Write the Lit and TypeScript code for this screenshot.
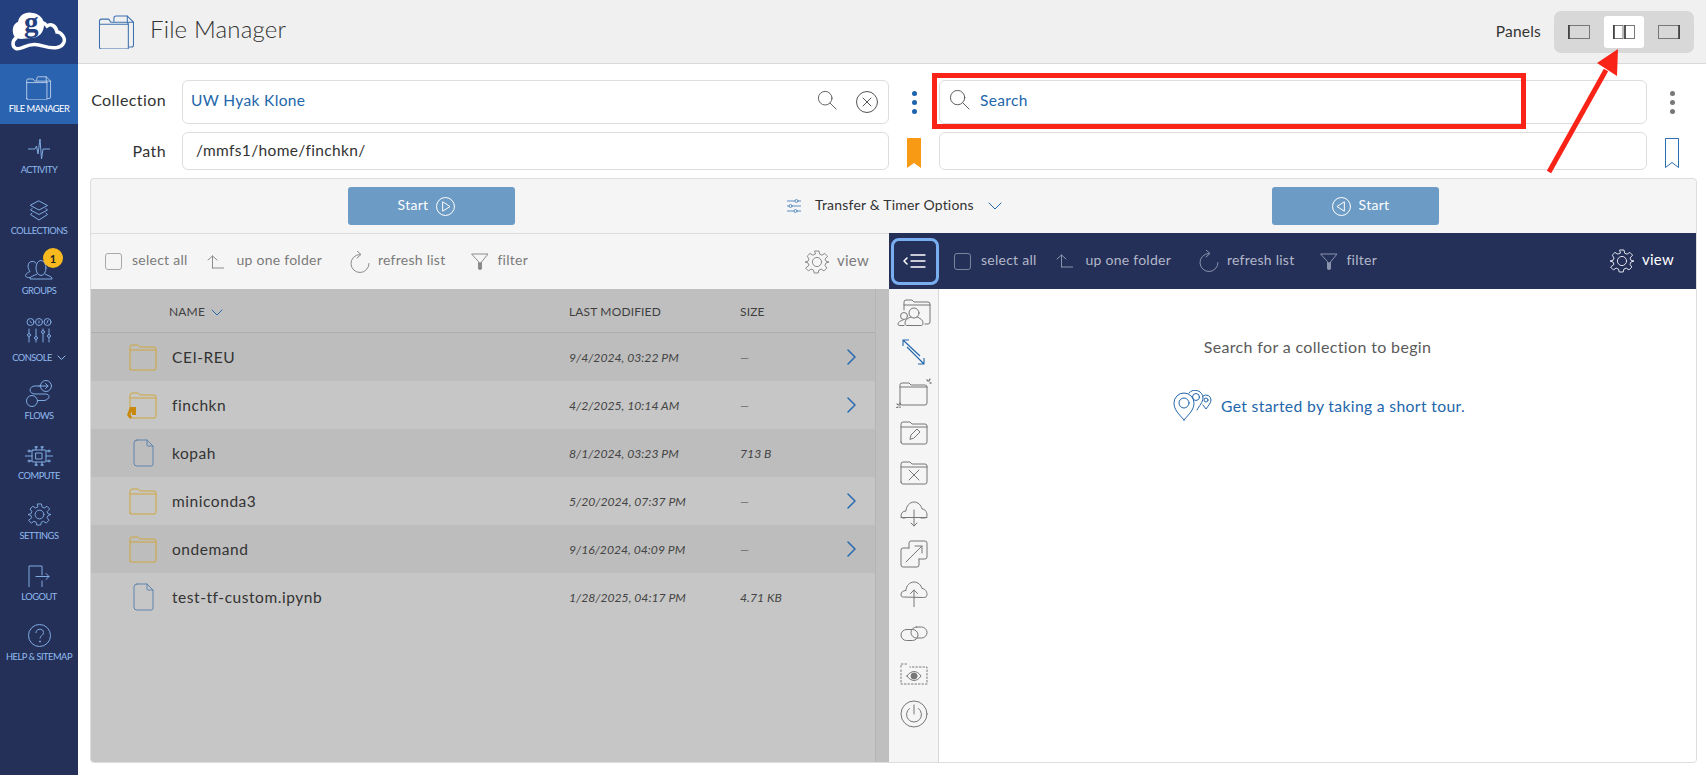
import { LitElement, html, css, svg } from "lit";
import { customElement } from "lit/decorators.js";

const icon = (w: number, h: number, vb: string, body: unknown, cls = "") => html`<svg class="ic ${cls}" width=${w} height=${h} viewBox=${vb} fill="none" stroke="currentColor" stroke-width="1" stroke-linecap="round" stroke-linejoin="round">${body}</svg>`;

const fileFolder = svg`<path d="M15 6V3a2 2 0 0 1 2-2h11l6 6v22a2 2 0 0 1-2 2h-2"/><path d="M28 1v6h6"/><path d="M1 31V6a2 2 0 0 1 2-2h7l2 3h15a2 2 0 0 1 2 2v23a1 1 0 0 1-1 1H3a2 2 0 0 1-2-2z"/><path d="M1 9h28"/>`;
const search = (s = 22) => icon(s, s, "0 0 22 22", svg`<circle cx="9" cy="9" r="7.5"/><path d="M14.5 14.5 21 21"/>`);
const gear = (s = 24) => icon(s, s, "0 0 24 24", svg`<circle cx="12" cy="12" r="4.6"/><path d="M10 1h4l.7 3.2 2.3 1 2.8-1.8 2.8 2.8L20 9l1 2.3 3 .7v0l-3 1-1 2.3 1.8 2.8-2.8 2.8-2.8-1.8-2.3 1-.7 2.9h-4l-.7-2.9-2.3-1-2.8 1.8-2.8-2.8L4 15.3 3 13l-3-1 3-.7L4 9 2.2 6.2 5 3.4l2.8 1.8 2.3-1z"/>`);
const folderRow = svg`<path d="M1 25V3a2 2 0 0 1 2-2h6l2 2h14a2 2 0 0 1 2 2v19a2 2 0 0 1-2 2H2a1 1 0 0 1-1-1z"/><path d="M1 6h26"/>`;
const fileRow = svg`<path d="M4 1h10l6 6v18a2 2 0 0 1-2 2H4a3 3 0 0 1-3-3V4a3 3 0 0 1 3-3z"/><path d="M14 1v5a1 1 0 0 0 1 1h5" stroke-width="1"/>`;

const navItems: { label: string; cls?: string; badge?: string; chev?: boolean; icon: unknown }[] = [
  { label: "File Manager", cls: "on", icon: icon(26, 24, "0 0 36 33", fileFolder) },
  { label: "Activity", icon: icon(22, 22, "0 0 22 22", svg`<path d="M0 11h7l1.5-3 1.5 8 2-15 1.5 20 1.5-10h7"/>`) },
  { label: "Collections", icon: icon(20, 21, "0 0 20 21", svg`<path d="M10 1l8.5 4.5L10 10 1.5 5.500z"/><path d="M3 8.500 1.500 10 10 14.500 18.500 10 17 8.500"/><path d="M3 13 1.500 14.500 10 20l8.500-5.500L17 13"/>`) },
  { label: "Groups", cls: "grp", badge: "1", icon: icon(28, 20, "0 0 28 20", svg`<ellipse cx="16" cy="8" rx="5" ry="7.500"/><path d="M12 14c-3 2-6 2-7 4v1h22v-1c-1-2-4-2-7-4"/><path d="M11 3a4.500 4.500 0 0 0-8 3c0 2 1 4 2 5.500-2 1-4 2-4.500 4 0 1 1 2 3 2h1"/>`) },
  { label: "Console", cls: "con", chev: true, icon: icon(26, 26, "0 0 26 26", svg`<circle cx="4.500" cy="4" r="3.500"/><circle cx="13" cy="4" r="3.500"/><circle cx="21.500" cy="4" r="3.500"/><path d="M4 3l1.500 2M13 3v2M22 2.500 21 5"/><path d="M3 11v13M10 11v13M17 11v13M23 11v13"/><circle cx="3" cy="17" r="1.500" fill="#253059"/><circle cx="10" cy="20" r="1.500" fill="#253059"/><circle cx="17" cy="14" r="1.500" fill="#253059"/><circle cx="23" cy="18" r="1.500" fill="#253059"/>`) },
  { label: "Flows", cls: "flo", icon: icon(27, 27, "0 0 27 27", svg`<circle cx="6" cy="21" r="5.500"/><circle cx="20" cy="6" r="5.500"/><path d="M13 6h9M19.500 3.500 22 6l-2.500 2.500"/><path d="M14 6H9c-3 0-5 2-5 4s2 4 5 4h10c3 0 4 1 4 2.500s-2 4-5 4h-6"/>`) },
  { label: "Compute", icon: icon(28, 20, "0 0 28 20", svg`<rect x="7" y="4" width="14" height="12" rx="1"/><rect x="11" y="7" width="6" height="6"/><path d="M0 10h7M21 10h7M5 5h2M5 15h2M21 5h2M21 15h2M11 1v3M17 1v3M11 16v3M17 16v3"/><circle cx="4" cy="5" r="1"/><circle cx="4" cy="15" r="1"/><circle cx="24" cy="5" r="1"/><circle cx="24" cy="15" r="1"/><circle cx="11" cy="1" r="1"/><circle cx="17" cy="1" r="1"/><circle cx="11" cy="19" r="1"/><circle cx="17" cy="19" r="1"/>`) },
  { label: "Settings", icon: gear(23) },
  { label: "Logout", icon: icon(22, 22, "0 0 22 22", svg`<path d="M1 22V1h13v9M14 16v6"/><path d="M8 11.500h13M18 8.500l3 3-3 3"/>`) },
  { label: "Help & Sitemap", icon: html`<svg class="ic" width="23" height="23" viewBox="0 0 23 23" fill="none" stroke="currentColor"><circle cx="11.500" cy="11.500" r="11"/><path d="M8 9c0-5 7.500-5 7.500-.5 0 3-3.500 3-3.500 6"/><circle cx="12" cy="17.500" r=".6" fill="currentColor"/></svg>` },
];

const rows = [
  { name: "CEI-REU", date: "9/4/2024, 03:22 PM", size: "—", kind: "folder" },
  { name: "finchkn", date: "4/2/2025, 10:14 AM", size: "—", kind: "link" },
  { name: "kopah", date: "8/1/2024, 03:23 PM", size: "713 B", kind: "file" },
  { name: "miniconda3", date: "5/20/2024, 07:37 PM", size: "—", kind: "folder" },
  { name: "ondemand", date: "9/16/2024, 04:09 PM", size: "—", kind: "folder" },
  { name: "test-tf-custom.ipynb", date: "1/28/2025, 04:17 PM", size: "4.71 KB", kind: "file" },
];

const stripIcons = [
  icon(34, 28, "0 0 34 28", svg`<path d="M7 11V3a2 2 0 0 1 2-2h6l2 2h14a2 2 0 0 1 2 2v18a2 2 0 0 1-2 2h-3"/><path d="M7 6h26"/><circle cx="17" cy="14" r="5"/><path d="M14 18c-3 1-6 3-6 6 0 2 1 2.500 2 2.500h14c1 0 2-.5 2-2.500 0-3-3-5-6-6"/><circle cx="7" cy="17" r="3.500"/><path d="M6 21c-2 .5-5 2-5 4 0 1 .5 1.500 2 1.500h4"/>`),
  html`<svg class="ic" width="24" height="28" viewBox="0 0 24 28" fill="none" stroke="currentColor" stroke-width="1.100"><path d="M1 1 18 17M1 7V1h6"/><path d="M5 8 22 25M22 19v6h-6"/></svg>`,
  icon(36, 30, "0 0 36 30", svg`<path d="M4 26V6a2 2 0 0 1 2-2h7l2 2h14a2 2 0 0 1 2 2v16a2 2 0 0 1-2 2H6a2 2 0 0 1-2-2z" transform="translate(0 1)"/><path d="M4 9h27"/><path d="M31 2l1 1M35 5h-1M34 1l-1 2M1 26l2 1M0 30l2-1M4 29l0 1" stroke-width="1.300"/>`),
  icon(28, 24, "0 0 28 24", svg`<path d="M1 21V3a2 2 0 0 1 2-2h7l2 2h13a2 2 0 0 1 2 2v16a2 2 0 0 1-2 2H3a2 2 0 0 1-2-2z"/><path d="M1 6h26"/><path d="M10 18l1-4 6-6 3 3-6 6z"/>`),
  icon(28, 24, "0 0 28 24", svg`<path d="M1 21V3a2 2 0 0 1 2-2h7l2 2h13a2 2 0 0 1 2 2v16a2 2 0 0 1-2 2H3a2 2 0 0 1-2-2z"/><path d="M1 6h26"/><path d="M9 9l10 10M19 9 9 19"/>`),
  icon(28, 26, "0 0 28 26", svg`<path d="M5 17H3a2 2 0 0 1-2-2c0-3 2-5 5-5 0-5 4-9 8-9s7 3 8 7c3 0 5 3 5 6 0 2-1 3-3 3h-3"/><path d="M1 16.500h26"/><path d="M14 9v16M11 22l3 3 3-3"/>`),
  icon(28, 28, "0 0 28 28", svg`<path d="M9 8V3a2 2 0 0 1 2-2h14a2 2 0 0 1 2 2v14a2 2 0 0 1-2 2h-6"/><path d="M19 19v6a2 2 0 0 1-2 2H3a2 2 0 0 1-2-2V10a2 2 0 0 1 2-2h6"/><path d="M6 22 22 6M15 6h7v7"/>`),
  icon(28, 26, "0 0 28 26", svg`<path d="M3 16c-1 0-2-.5-2-2 0-3 2-4.500 5-4.500 0-5 4-8.500 8-8.500s7 3 8 6.500c3 0 5 3 5 6 0 2-1 3-3 3z"/><path d="M14 26V9M10.500 12.500 14 9l3.500 3.500"/>`),
  icon(28, 16, "0 0 28 16", svg`<rect x="1" y="3.500" width="17" height="11" rx="5.500"/><rect x="11" y="1" width="16" height="11" rx="5.500"/>`),
  icon(28, 22, "0 0 28 22", svg`<path d="M1 4V1h7M1 7v14M1 21h26V4H10" stroke-dasharray="1.500 2"/><path d="M7 13c4-6 10-6 14 0-4 6-10 6-14 0z"/><circle cx="14" cy="13" r="3" fill="currentColor"/>`),
  icon(28, 28, "0 0 28 28", svg`<circle cx="14" cy="14" r="13"/><path d="M9.500 8.500a7.500 7.500 0 1 0 9 0"/><path d="M14 5v9"/>`),
];

const panelOne = (thick: number) => html`<svg class="pi" width="22" height="14" viewBox="0 0 22 14"><rect x=".5" y=".5" width="21" height="13" fill="none" stroke="#777"/><path d="M${thick} 0v14" stroke="#333" stroke-width="1.500"/></svg>`;
const panelTwo = html`<svg class="pi" width="22" height="14" viewBox="0 0 22 14" fill="none"><rect x=".5" y=".5" width="9.500" height="13" stroke="#777"/><rect x="12" y=".5" width="9.500" height="13" stroke="#777"/><path d="M1 0v14M12 0v14" stroke="#333" stroke-width="1.500"/></svg>`;

@customElement("file-toolbar")
class FileToolbar extends LitElement {
  static styles = css`
    :host { display: flex; align-items: center; height: 100%; font-size: 14px; color: #7b7b7b; letter-spacing: .25px; flex: 1; min-width: 0; }
    :host([dark]) { color: #b2b7c8; }
    .ic { display: block; color: #8b8b8b; }
    :host([dark]) .ic { color: #8c93ad; }
    .t { padding-bottom: 4px; }
    .cb { width: 17px; height: 17px; border: 1px solid #a9a9a9; border-radius: 3px; margin-right: 10px; box-sizing: border-box; }
    :host([dark]) .cb { border-color: #7d84a0; }
    .it { display: flex; align-items: center; }
    .it .ic { margin-right: 8px; }
    .it.up .ic { margin-right: 13px; }
    .view { margin-left: auto; display: flex; align-items: center; font-size: 15px; }
    .view .ic { margin-right: 8px; }
    :host([dark]) .view { color: #fff; }
    :host([dark]) .view .ic { color: #dfe2ea; }
    .s1 { margin-right: 19px; }
    .s2 { margin-right: 27px; }
    .s3 { margin-right: 26px; }
  `;
  render() {
    return html`
      <div class="cb"></div><span class="t s1">select all</span>
      <div class="it up s2">${icon(17, 14, "0 0 17 14", svg`<path d="M5.500 13V1M1 5l4.500-4L10 5M5.500 13H17"/>`)}<span class="t">up one folder</span></div>
      <div class="it s3">${icon(21, 22, "0 0 21 22", svg`<path d="M10.500 3.500A9 9 0 1 0 20 12.500"/><path d="M8 0l4 3.500L8 7"/>`)}<span class="t">refresh list</span></div>
      <div class="it">${icon(18, 17, "0 0 18 17", svg`<path d="M1 1h16l-6.500 8v7h-3V9z"/><path d="M9 10v6" stroke-width="2"/>`)}<span class="t">filter</span></div>
      <div class="view">${gear(24)}<span class="t">view</span></div>
    `;
  }
}

@customElement("app-root")
export class AppRoot extends LitElement {
  static styles = css`
    :host { display: block; width: 1706px; height: 775px; position: relative; overflow: hidden; font-family: Lato, "Open Sans", sans-serif; color: #333; background: #fff; }
    * { box-sizing: border-box; }
    .ic { display: block; }
    .app { display: flex; height: 100%; }
    .side { width: 78px; flex: none; background: #253059; display: flex; flex-direction: column; }
    .logo { height: 64px; background: #24407f; display: flex; align-items: center; justify-content: center; }
    .nav { height: 60.3px; display: flex; flex-direction: column; align-items: center; justify-content: flex-end; color: #7faae0; position: relative; padding-bottom: 8px; flex: none; }
    .nav.on { background: #2a63b0; color: #e3ecf8; height: 60px; padding-bottom: 9px; }
    .nav.con { height: 67px; }
    .nav.flo { height: 58px; }
    .nav .lb { display: flex; align-items: center; font-size: 9.300px; letter-spacing: -.5px; text-transform: uppercase; line-height: 12px; margin-top: 4px; white-space: nowrap; color: #8fbaee; }
    .nav.grp .lb { margin-top: 5px; }
    .nav.con .lb { margin-top: 8px; }
    .nav.flo .lb { margin-top: 3px; }
    .nav.on .lb { color: #fff; margin-top: 3px; }
    .nav .lb .ic { margin-left: 5px; }
    .badge { position: absolute; left: 43px; top: 3.500px; width: 20px; height: 20px; border-radius: 50%; background: #f7b91e; color: #222; font-size: 11px; font-weight: 700; display: flex; align-items: center; justify-content: center; }
    .main { flex: 1; min-width: 0; display: flex; flex-direction: column; }
    .hdr { height: 64px; background: #f0f0f0; border-bottom: 1px solid #d9d9d9; display: flex; align-items: center; padding: 0 12px 0 20px; flex: none; }
    .hdr .ic { color: #3a6fb0; margin-right: 14px; }
    .title { font-size: 24px; font-weight: 300; letter-spacing: .17px; color: #333; padding-bottom: 6px; }
    .panels-lb { margin-left: auto; font-size: 15.500px; margin-right: 13px; letter-spacing: .2px; padding-bottom: 2px; }
    .panels { width: 140px; height: 42px; background: #d8d8d8; border-radius: 7px; display: flex; align-items: center; justify-content: center; gap: 5px; }
    .pb { width: 40px; height: 32px; display: flex; align-items: center; justify-content: center; border-radius: 3px; }
    .pb.on { background: #fff; }
    .form { display: grid; grid-template-columns: 92px 707px 50px 708px 50px; grid-template-rows: 44px 38px; row-gap: 8px; padding: 16px 0 8px 12px; flex: none; }
    .form label { text-align: right; padding-right: 16px; font-size: 16px; align-self: center; letter-spacing: .4px; }
    .form label.c { padding-bottom: 5px; }
    .form label.p { padding-bottom: 2px; }
    .inp { border: 1px solid #ddd; border-radius: 6px; display: flex; align-items: center; padding: 0 8px; font-size: 15.500px; letter-spacing: .35px; background: #fff; }
    .inp.top { padding-bottom: 5px; }
    .inp.path { padding-left: 13px; padding-bottom: 2px; }
    .inp .ic { color: #555; }
    .inp .x { margin: 5px 2px 0 19px; }
    .inp.sr { padding-left: 9px; }
    .inp.sr .blue { margin-left: 10px; }
    .grow { flex: 1; }
    .blue { color: #2266ab; }
    .mid { display: flex; align-items: center; justify-content: center; }
    .mid.mk svg { margin-top: 4px; }
    .dots { display: flex; flex-direction: column; gap: 4px; }
    .dots i { width: 5px; height: 5px; border-radius: 50%; background: #1e64ac; display: block; }
    .dots.g i { background: #777; }
    .panel { margin: 0 9px 12px 12px; flex: 1; border: 1px solid #ddd; border-radius: 4px; display: flex; flex-direction: column; overflow: hidden; background: #f5f5f5; min-height: 0; }
    .go { height: 54px; flex: none; display: flex; align-items: center; padding-left: 257px; }
    .btn { width: 167px; height: 38px; background: #6c9bc5; color: #fff; border-radius: 3px; display: flex; align-items: center; justify-content: center; gap: 8px; font-size: 14px; letter-spacing: .3px; flex: none; }
    .btn span { padding-bottom: 3px; }
    .btn.l { padding-right: 10px; }
    .btn.r { padding-left: 10px; }
    .btn .ic { color: #fff; }
    .opt { margin-left: 272px; display: flex; align-items: center; font-size: 14px; gap: 14px; color: #333; letter-spacing: .2px; width: 485px; flex: none; }
    .opt span.lbl { padding-bottom: 3px; }
    .opt .ic { color: #5d8fc4; }
    .opt .chev .ic { color: #2266ab; }
    .opt .chev { margin-left: 0; }
    .body { flex: 1; display: flex; min-height: 0; }
    .left { width: 798px; flex: none; display: flex; flex-direction: column; }
    .tb { height: 56px; flex: none; display: flex; align-items: center; padding: 0 20px 0 14px; border-top: 1px solid #ddd; }
    .list { flex: 1; background: #c6c6c6; display: flex; min-height: 0; }
    .rows { flex: 1; min-width: 0; }
    .bar { width: 14px; background: #bfbfbf; border-left: 1px solid #b5b5b5; flex: none; }
    .lh, .row { display: grid; grid-template-columns: 81px 397px 171px 1fr 28px; align-items: center; }
    .lh { height: 44px; background: #bfbfbf; border-bottom: 1px solid #adadad; font-size: 12px; color: #3f3f3f; text-transform: uppercase; letter-spacing: .15px; padding-top: 2px; }
    .lh .ic { display: inline-block; margin-left: 6px; color: #2f6aa8; }
    .lh .nm { margin-left: -3px; }
    .row { height: 48px; font-size: 15.500px; letter-spacing: .55px; color: #333; }
    .row:nth-child(even) { background: #bdbdbd; }
    .row .date, .row .sz { font-style: italic; font-size: 12.200px; color: #444; letter-spacing: 0; }
    .row .i { position: relative; display: flex; padding-left: 38px; }
    .row .i.file { padding-left: 42px; }
    .row .i .ic { color: #cfa63d; }
    .row .i.file .ic { color: #5e84ad; }
    .row .i .shortcut { position: absolute; left: 36px; top: 15px; color: #c8890d; }
    .row .ch { color: #2a6ab0; }
    .right { flex: 1; display: flex; flex-direction: column; min-width: 0; }
    .dark { background: #253059; }
    .dark.tb { border-top: 0; padding: 0 22px 0 2px; }
    .focus { width: 48px; height: 47px; border: 3px solid #79aef0; border-radius: 8px; display: flex; align-items: center; justify-content: center; margin-right: 15px; flex: none; }
    .focus .ic { color: #fff; }
    .rb { flex: 1; display: flex; min-height: 0; }
    .strip { width: 50px; flex: none; background: #f5f5f5; border-right: 1px solid #d8d8d8; padding-top: 4px; }
    .strip div { height: 40.100px; display: flex; align-items: center; justify-content: center; color: #777; }
    .strip .blue { color: #2266ab; }
    .content { flex: 1; background: #fff; display: flex; flex-direction: column; align-items: center; font-size: 16px; color: #5a5a5a; letter-spacing: .35px; }
    .content .q { margin-top: 48px; }
    .tour { margin-top: 34px; display: flex; align-items: center; gap: 9px; color: #2266ab; font-size: 15.700px; margin-left: 3px; }
    .red { position: absolute; left: 932px; top: 73px; width: 594px; height: 56px; border: 5px solid #fa2317; pointer-events: none; }
    .arrow { position: absolute; left: 0; top: 0; pointer-events: none; }
  `;

  render() {
    return html`
      <div class="app">
        <nav class="side">
          <div class="logo">
            <svg width="56" height="58" viewBox="0 -8 56 58">
              <path fill="none" stroke="#fff" stroke-width="3.500" stroke-linecap="round" d="M5 27C1 30 1 36 5 37.500 10 39 15 33 24 33.500 32 34 37 38 46 36.500 53 35 55 29 52 25 50 22 47 21 46 21 45 15 40 12 36 15 33 11 30 11 28 13"/>
              <path fill="#fff" d="M3 25C0 18 3 12 7 11 8 4 15 0 22 2 29 3 33 8 33 14 33 21 28 27 20 27 12 28 6 29 3 25z"/>
              <text x="13" y="21" font-family="Liberation Serif, serif" font-size="29" font-weight="700" fill="#24407f">g</text>
            </svg>
          </div>
          ${navItems.map((n) => html`
            <div class="nav ${n.cls ?? ""}">
              ${n.icon}
              ${n.badge ? html`<span class="badge">${n.badge}</span>` : ""}
              <span class="lb">${n.label}${n.chev ? icon(9, 6, "0 0 9 6", svg`<path d="M1 1l3.500 3.500L8 1"/>`) : ""}</span>
            </div>`)}
        </nav>
        <div class="main">
          <header class="hdr">
            ${icon(38, 34, "0 0 36 33", fileFolder)}
            <span class="title">File Manager</span>
            <span class="panels-lb">Panels</span>
            <div class="panels">
              <div class="pb">${panelOne(1)}</div>
              <div class="pb on">${panelTwo}</div>
              <div class="pb">${panelOne(21)}</div>
            </div>
          </header>
          <section class="form">
            <label class="c">Collection</label>
            <div class="inp top">
              <span class="blue">UW Hyak Klone</span>
              <span class="grow"></span>
              ${search(20)}
              ${icon(22, 22, "0 0 22 22", svg`<circle cx="11" cy="11" r="10.500"/><path d="M7 7l8 8M15 7l-8 8"/>`, "x")}
            </div>
            <div class="mid"><div class="dots"><i></i><i></i><i></i></div></div>
            <div class="inp top sr">
              ${search(21)}
              <span class="blue">Search</span>
            </div>
            <div class="mid"><div class="dots g"><i></i><i></i><i></i></div></div>
            <label class="p">Path</label>
            <div class="inp path">/mmfs1/home/finchkn/</div>
            <div class="mid mk"><svg width="14" height="30" viewBox="0 0 14 30"><path d="M0 0h14v30l-7-5-7 5z" fill="#f89a13"/></svg></div>
            <div class="inp"></div>
            <div class="mid mk"><svg width="14" height="30" viewBox="0 0 14 30" fill="none" stroke="#2a6cb0"><path d="M.5.500h13v29l-6.500-5-6.500 5z"/></svg></div>
          </section>
          <section class="panel">
            <div class="go">
              <div class="btn l"><span>Start</span> ${icon(19, 19, "0 0 19 19", svg`<circle cx="9.500" cy="9.500" r="9"/><path d="M7 5l7 4.500L7 14z"/>`)}</div>
              <div class="opt">
                ${icon(14, 14, "0 0 14 14", svg`<path d="M0 2h8M11 2h3M0 7h2M5 7h9M0 12h7M10 12h4"/><circle cx="9.500" cy="2" r="1.500"/><circle cx="3.500" cy="7" r="1.500"/><circle cx="8.500" cy="12" r="1.500"/>`)}
                <span class="lbl">Transfer &amp; Timer Options</span>
                <span class="chev">${icon(14, 8, "0 0 14 8", svg`<path d="M1 1l6 6 6-6"/>`)}</span>
              </div>
              <div class="btn r">${icon(19, 19, "0 0 19 19", svg`<circle cx="9.500" cy="9.500" r="9"/><path d="M12 5 5 9.500l7 4.500z"/>`)} <span>Start</span></div>
            </div>
            <div class="body">
              <div class="left">
                <div class="tb"><file-toolbar></file-toolbar></div>
                <div class="list">
                  <div class="rows">
                    <div class="lh">
                      <span></span>
                      <span class="nm">Name${icon(12, 7, "0 0 12 7", svg`<path d="M1 1l5 5 5-5"/>`)}</span>
                      <span>Last Modified</span>
                      <span>Size</span>
                      <span></span>
                    </div>
                    ${rows.map((r) => html`
                      <div class="row">
                        <div class="i ${r.kind === "file" ? "file" : ""}">
                          ${r.kind === "file" ? icon(21, 28, "0 0 21 28", fileRow) : icon(28, 27, "0 0 28 27", folderRow)}
                          ${r.kind === "link" ? html`<svg class="shortcut ic" width="9" height="12" viewBox="0 0 9 12"><path d="M3 0h6v8H5V5L3 7l2 3-2 2-3-4z" fill="currentColor"/></svg>` : ""}
                        </div>
                        <span>${r.name}</span>
                        <span class="date">${r.date}</span>
                        <span class="sz">${r.size}</span>
                        ${r.kind !== "file" ? html`<span class="ch">${icon(9, 16, "0 0 9 16", svg`<path d="M1 1l7 7-7 7" stroke-width="1.500"/>`)}</span>` : html`<span></span>`}
                      </div>`)}
                  </div>
                  <div class="bar"></div>
                </div>
              </div>
              <div class="right">
                <div class="tb dark">
                  <div class="focus">${icon(24, 14, "0 0 24 14", svg`<path d="M4 4 1 7l3 3" stroke-width="1.500"/><path d="M8 1h14M8 7h14M8 13h14" stroke-width="1.300"/>`)}</div>
                  <file-toolbar dark></file-toolbar>
                </div>
                <div class="rb">
                  <div class="strip">
                    ${stripIcons.map((s, i) => html`<div class=${i === 1 ? "blue" : ""}>${s}</div>`)}
                  </div>
                  <div class="content">
                    <div class="q">Search for a collection to begin</div>
                    <div class="tour">
                      ${icon(39, 31, "0 0 39 31", svg`<path d="M11 30C6 24 1 20 1 13a10 10 0 0 1 20 0c0 7-5 11-10 17z"/><circle cx="11" cy="13" r="5"/><path d="M16 3a8 8 0 0 1 14 5c0 4-4 8-6 12"/><circle cx="23" cy="7" r="3.500"/><path d="M30 6a5 5 0 0 1 8 4c0 3-3 6-5 9-1-1-2-3-3-4"/><circle cx="33" cy="10" r="2"/>`)}
                      <span>Get started by taking a short tour.</span>
                    </div>
                  </div>
                </div>
              </div>
            </div>
          </section>
        </div>
      </div>
      <div class="red"></div>
      <svg class="arrow" width="1706" height="775" viewBox="0 0 1706 775">
        <path d="M1549 172 1606 70" stroke="#fa2317" stroke-width="5" fill="none"/>
        <path d="M1618 49 1597 63 1617 76z" fill="#fa2317"/>
      </svg>
    `;
  }
}
void FileToolbar;
